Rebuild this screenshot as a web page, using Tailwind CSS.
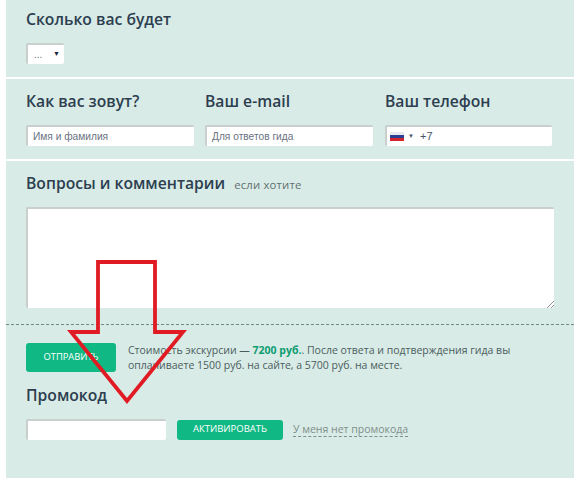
<!DOCTYPE html>
<html lang="ru">
<head>
  <meta charset="UTF-8">
  <title>Заявка на экскурсию</title>
  <script src="https://cdn.jsdelivr.net/npm/@tailwindcss/browser@4"></script>
</head>
<body class="bg-white font-['Open_Sans',sans-serif] text-[#2c3e50] w-[580px] h-[483px] overflow-hidden relative">
  <main class="ml-[6px] w-[568px] h-[478px] bg-[#d9ebe6] flex flex-col">
    <!-- Количество -->
    <section class="flex-none h-[79px] pl-[20px] pt-[8px] border-b-2 border-white">
      <h2 class="text-[15.7px] leading-[22px] font-semibold">Сколько вас будет</h2>
      <div class="mt-[13px] w-[38px] h-[21px] bg-white rounded-[2px] border-t-2 border-l-2 border-[#c9cfcc] flex items-center justify-between pl-[6px] pr-[4px] text-[10px] text-gray-500 font-['Liberation_Sans',sans-serif]">
        <span>...</span>
        <span class="text-[7px] text-gray-800">▼</span>
      </div>
    </section>

    <!-- Контакты -->
    <section class="flex-none h-[82px] pl-[20px] pt-[11px] border-b-2 border-white grid grid-cols-[168px_168px_168px] gap-x-[11px]">
      <div>
        <h2 class="text-[15.7px] leading-[22px] font-semibold">Как вас зовут?</h2>
        <div class="mt-[13px] h-[21px] bg-white rounded-[2px] border-t-2 border-l-2 border-[#c9cfcc] pl-[5px] text-[10.2px] leading-[19px] text-gray-500 font-['Liberation_Sans',sans-serif]">Имя и фамилия</div>
      </div>
      <div>
        <h2 class="text-[15.7px] leading-[22px] font-semibold">Ваш e-mail</h2>
        <div class="mt-[13px] h-[21px] bg-white rounded-[2px] border-t-2 border-l-2 border-[#c9cfcc] pl-[5px] text-[10.2px] leading-[19px] text-gray-500 font-['Liberation_Sans',sans-serif]">Для ответов гида</div>
      </div>
      <div class="ml-[1px]">
        <h2 class="text-[15.7px] leading-[22px] font-semibold">Ваш телефон</h2>
        <div class="mt-[13px] h-[21px] bg-white rounded-[2px] border-t-2 border-l-2 border-[#c9cfcc] pl-[3px] flex items-center text-[11px] text-gray-600 font-['Liberation_Sans',sans-serif]">
          <span class="w-[14px] h-[9px] flex flex-col">
            <span class="h-[3px] bg-[#e8e8f0]"></span>
            <span class="h-[3px] bg-[#2a3f94]"></span>
            <span class="h-[3px] bg-[#d0252f]"></span>
          </span>
          <span class="ml-[4px] text-[6px] text-gray-600">▼</span>
          <span class="ml-[6px]">+7</span>
        </div>
      </div>
    </section>

    <!-- Комментарии -->
    <section class="flex-none h-[164px] pl-[20px] pt-[11px] border-b border-dashed border-[#6f8a84]">
      <div class="flex items-baseline">
        <h2 class="text-[15.7px] leading-[22px] font-semibold">Вопросы и комментарии</h2>
        <span class="ml-[9px] text-[11.3px] text-[#5f6f70] tracking-[0.2px]">если хотите</span>
      </div>
      <div class="mt-[13px] w-[528px] h-[101px] bg-white rounded-[2px] border-t-2 border-l-2 border-[#c9cfcc] relative">
        <svg class="absolute right-0 bottom-0" width="8" height="8" viewBox="0 0 8 8" fill="none" stroke="#777" stroke-width="0.8"><path d="M1 8 8 1M5 8 8 5"/></svg>
      </div>
    </section>

    <!-- Отправка -->
    <section class="flex-none pl-[20px] pt-[18px] flex items-start">
      <button class="w-[90px] h-[29px] rounded-[3px] bg-[#10b884] text-white text-[9.4px] uppercase">Отправить</button>
      <p class="ml-[12px] w-[400px] text-[10.5px] leading-[15px] text-[#4b5d5e]">Стоимость экскурсии — <b class="text-[#0f9d72] font-bold">7200 руб.</b>. После ответа и подтверждения гида вы оплачиваете 1500 руб. на сайте, а 5700 руб. на месте.</p>
    </section>

    <!-- Промокод -->
    <section class="flex-none pl-[20px] pt-[11px]">
      <h2 class="text-[15.7px] leading-[22px] font-semibold">Промокод</h2>
      <div class="mt-[13px] flex items-center">
        <div class="w-[140px] h-[21px] bg-white rounded-[2px] border-t-2 border-l-2 border-[#c9cfcc]"></div>
        <button class="ml-[11px] w-[106px] h-[20px] rounded-[3px] bg-[#10b884] text-white text-[9.5px] uppercase">Активировать</button>
        <a href="#" class="ml-[10px] text-[10.5px] leading-[13px] text-[#7e8f8c] border-b border-dashed border-[#7e8f8c]">У меня нет промокода</a>
      </div>
    </section>
  </main>

  <!-- Красная стрелка поверх формы -->
  <svg class="absolute left-0 top-0 pointer-events-none" width="580" height="483" viewBox="0 0 580 483" fill="none">
    <path d="M98 262H155V332H183L127 401L71 332H98Z" stroke="#e01b24" stroke-width="3.8" stroke-linejoin="miter"/>
  </svg>
</body>
</html>
